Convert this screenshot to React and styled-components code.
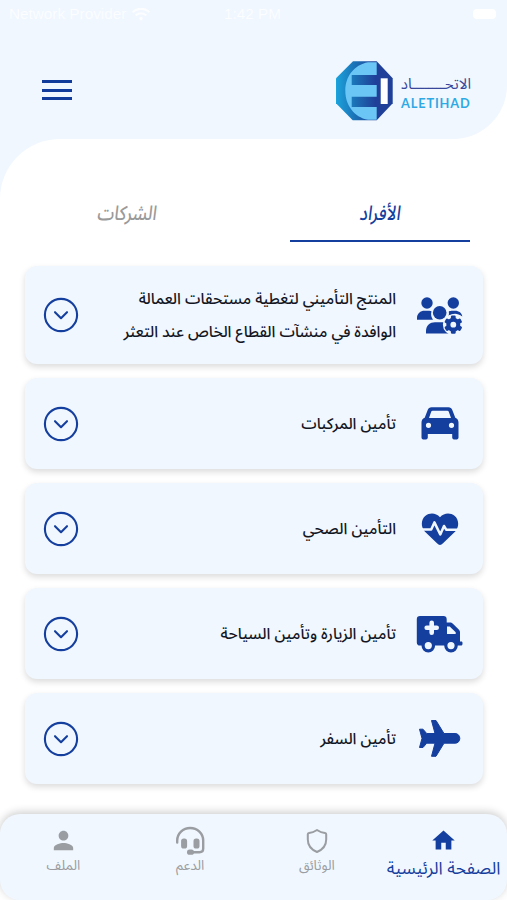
import React from "react";
import styled, { createGlobalStyle } from "styled-components";
import { FaWifi } from "react-icons/fa";
import { MdPerson, MdHome } from "react-icons/md";

const GlobalStyle = createGlobalStyle`
  * {
    box-sizing: border-box;
  }
  body {
    margin: 0;
    background: #fff;
    font-family: "Noto Sans Arabic", "Noto Sans", "DejaVu Sans", sans-serif;
  }
  svg {
    display: block;
  }
`;

const Screen = styled.div`
  display: flex;
  flex-direction: column;
  height: 900px;
  overflow: hidden;
  background: linear-gradient(#f0f7ff 50%, #fff 50%);
`;

const HeaderBack = styled.div`
  flex: none;
  background: linear-gradient(to right, #f0f7ff 50%, #fff 50%);
`;

const Header = styled.header`
  height: 139px;
  background: #f0f7ff;
  border-radius: 0 0 54px 0;
`;

const StatusBar = styled.div`
  display: grid;
  grid-template-columns: 1fr auto 1fr;
  align-items: center;
  height: 27px;
  padding: 0 11px 0 9px;
  font: 15.3px "Liberation Sans", sans-serif;
  color: #fbfdff;
`;

const Carrier = styled.div`
  display: flex;
  align-items: center;
  gap: 6px;
  white-space: nowrap;
`;

const Battery = styled.div`
  justify-self: end;
  width: 23px;
  height: 10px;
  border-radius: 4px;
  background: #fff;
`;

const TopBar = styled.div`
  display: flex;
  align-items: center;
  justify-content: space-between;
  height: 126px;
  padding: 0 36px 0 42px;
`;

const Burger = styled.div`
  display: flex;
  flex-direction: column;
  justify-content: space-between;
  width: 30px;
  height: 20px;

  span {
    height: 3px;
    background: #123c9c;
  }
`;

const Brand = styled.div`
  display: flex;
  align-items: center;
  gap: 8px;
  padding-top: 2px;
`;

const BrandName = styled.div`
  display: flex;
  flex-direction: column;
  width: 70px;
  white-space: nowrap;
`;

const BrandArabic = styled.span`
  font-size: 15px;
  line-height: 23px;
  color: #38479a;
`;

const BrandLatin = styled.span`
  font: 700 12.8px/14px Lato, sans-serif;
  letter-spacing: 0.85px;
  color: #2fa9e4;
`;

const Body = styled.main`
  flex: 1;
  padding: 61px 24px 0 25px;
  background: #fff;
  border-radius: 60px 0 0 0;
`;

const Tabs = styled.div`
  display: grid;
  grid-template-columns: 180px 180px;
  justify-content: space-between;
  padding: 0 13px 0 12px;
`;

const Tab = styled.div`
  height: 42px;
  border-bottom: 2px solid ${({ $active }) => ($active ? "#153f9e" : "transparent")};
  color: ${({ $active }) => ($active ? "#153f9e" : "#9a9a9a")};
  font-size: 20px;
  font-weight: 500;
  line-height: 28px;
  text-align: center;

  span {
    display: inline-block;
    transform: scaleX(0.84) skewX(-10deg);
  }
`;

const List = styled.div`
  display: flex;
  flex-direction: column;
  gap: 14px;
  padding-top: 24px;
`;

const Card = styled.div`
  display: flex;
  align-items: center;
  height: ${({ $tall }) => ($tall ? "98px" : "91px")};
  padding: 0 20px 0 18px;
  background: #f0f7ff;
  border-radius: 12px;
  box-shadow: 0 3px 6px rgba(0, 0, 0, 0.14);
`;

const CardText = styled.div`
  flex: 1;
  padding: 2px 20px 0 0;
  font-size: 15.5px;
  font-weight: 500;
  line-height: 33px;
  color: #14161f;
  white-space: nowrap;
`;

const IconBox = styled.div`
  display: flex;
  justify-content: center;
  width: 47px;
  color: #153f9e;
`;

const BottomNav = styled.nav`
  flex: none;
  display: grid;
  grid-template-columns: repeat(4, 1fr);
  height: 86px;
  background: #f0f7ff;
  border-radius: 20px;
  box-shadow: 0 -2px 8px rgba(0, 0, 0, 0.2);
`;

const NavItem = styled.div`
  display: flex;
  flex-direction: column;
  align-items: center;
  padding-top: 11px;
  font-size: ${({ $active }) => ($active ? "17.4px" : "13.6px")};
  line-height: ${({ $active }) => ($active ? "25px" : "20px")};
  color: ${({ $active }) => ($active ? "#153f9e" : "#9a9da1")};
  white-space: nowrap;
`;

const NavIcon = styled.div`
  display: grid;
  place-items: center;
  width: 32px;
  height: 31px;
`;

const Logo = () => (
  <svg width="57" height="60" viewBox="0 0 57 60">
    <defs>
      <linearGradient id="logoDark" x1="0" x2="1">
        <stop offset="0" stopColor="#1ba3dc" />
        <stop offset="0.35" stopColor="#1b6fb4" />
        <stop offset="0.7" stopColor="#1f3f98" />
      </linearGradient>
    </defs>
    <path d="M17 .3H40.7L56.7 17.3V42.3L40.7 59.3H16.7L0 42.3V17.3Z" fill="url(#logoDark)" />
    <path d="M40.7 1.2V14H15.7V24H40.7V35.7H15.7V46H40.7V58.8H32C18 56 9.3 44 9.3 29.7S18 4 32 1.2Z" fill="#6cc6f5" />
    <path d="M44.7 17.3h7V43h-7z" fill="#fff" />
  </svg>
);

const gearTeeth = [0, 60, 120, 180, 240, 300];

const UsersGearIcon = () => (
  <svg width="47" height="40" viewBox="0 0 47 40" fill="currentColor">
    <circle cx="11" cy="8" r="5.7" />
    <circle cx="37.3" cy="8" r="5.7" />
    <path d="M1 24.7V23C1 18.5 4.5 15.8 8.5 15.8H13.3C14.3 15.8 15 16 15.5 16.2C14.6 19.3 15.2 22.3 17 24.7Z" />
    <path d="M32.8 16.5C34 15.9 35 15.8 36.5 15.8H39C43 15.8 46 18.2 46.3 21.5C41 17.5 36.5 18 32.5 21.2C33 19.5 33.1 18 32.8 16.5Z" />
    <circle cx="23.7" cy="17.8" r="6.8" />
    <path d="M10 38.5V36C10 30.5 14 27.3 19 27.3H29L34 38.5Z" />
    <circle cx="37.3" cy="29.7" r="10.4" fill="#f0f7ff" />
    <circle cx="37.3" cy="29.7" r="7" />
    {gearTeeth.map((deg) => (
      <rect key={deg} x="34.9" y="20.6" width="4.8" height="5" rx="1.2" transform={`rotate(${deg} 37.3 29.7)`} />
    ))}
    <circle cx="37.3" cy="29.7" r="2.9" fill="#f0f7ff" />
  </svg>
);

const CarIcon = () => (
  <svg width="38" height="33" viewBox="0 0 38 33" fill="currentColor">
    <path
      fillRule="evenodd"
      d="M10.5.3H27.5C29.3.3 30.6 1.2 31.3 2.9L34.3 10.7C36.4 11.5 37.5 13.2 37.5 15.4V30.6C37.5 31.8 36.8 32.4 35.8 32.4H33C31.9 32.4 31.2 31.8 31.2 30.6V27H6.8V30.6C6.8 31.8 6.1 32.4 5 32.4H2.2C1.2 32.4.5 31.8.5 30.6V15.4C.5 13.2 1.6 11.5 3.7 10.7L6.7 2.9C7.4 1.2 8.7.3 10.5.3ZM11.6 3.7C10.9 3.7 10.5 4 10.2 4.7L8 11H30L27.8 4.7C27.5 4 27.1 3.7 26.4 3.7ZM7.5 15.7A2.6 2.6 0 1 0 7.5 20.9A2.6 2.6 0 1 0 7.5 15.7ZM30.5 15.7A2.6 2.6 0 1 0 30.5 20.9A2.6 2.6 0 1 0 30.5 15.7Z"
    />
  </svg>
);

const HeartIcon = () => (
  <svg width="38" height="33" viewBox="0 -1 38 33">
    <path d="M19 4.2C23-.4 29.5-.5 33.5 2.8C37.8 6.3 38.6 13 34.5 18.2L22 30.3C20 32.4 18 32.4 16 30.3L3.5 18.2C-.6 13 .2 6.3 4.5 2.8C8.5-.5 15-.4 19 4.2Z" fill="currentColor" />
    <path d="M0 16.4H10.2L13.4 9.4L19.3 21.5L23 13L25.2 16.7H38" fill="none" stroke="#f0f7ff" strokeWidth="2.5" strokeLinejoin="round" />
  </svg>
);

const AmbulanceIcon = () => (
  <svg width="47" height="38" viewBox="0 0 47 38" fill="currentColor">
    <path d="M4 1H27.5C29.5 1 30.7 2.2 30.7 4.2V7.5H34C35.2 7.5 36 7.8 36.9 8.7L42.5 14.3C43.5 15.3 44 16.2 44 17.5V26.5H45.3C46.2 26.5 46.5 27 46.5 28V28.8C46.5 30 46 30.6 45 30.6H4C2 30.6.8 29.4.8 27.4V4.2C.8 2.2 2 1 4 1Z" />
    <path d="M31 11.4H33.7L39.7 17.2V19H31Z" fill="#f0f7ff" />
    <path d="M15.7 7.7V17.7M10.7 12.7H20.7" stroke="#f0f7ff" strokeWidth="4.6" strokeLinecap="round" />
    <circle cx="12.3" cy="30.6" r="5.2" fill="#f0f7ff" stroke="currentColor" strokeWidth="3.2" />
    <circle cx="35" cy="30.6" r="5.2" fill="#f0f7ff" stroke="currentColor" strokeWidth="3.2" />
  </svg>
);

const PlaneIcon = () => (
  <svg width="43" height="39" viewBox="0 0 43 39" fill="currentColor">
    <path
      d="M13.5 1.5H18L26 14.5H37C40 14.5 41.8 16.8 41.8 19.4S40 24.2 37 24.2H26L18 37.3H13.5L17 24.2H8.7L5 28.5H1.5L4 19.4L1.5 10.2H5L8.7 14.5H17Z"
      stroke="currentColor"
      strokeLinejoin="round"
    />
  </svg>
);

const ChevronIcon = () => (
  <svg width="36" height="36" viewBox="0 0 36 36" fill="none" stroke="#153f9e" strokeWidth="2.1" strokeLinecap="round" strokeLinejoin="round">
    <circle cx="18" cy="18" r="16.1" />
    <path d="M12 15.2L18 21.2L24 15.2" />
  </svg>
);

const HeadsetIcon = () => (
  <svg width="30" height="30" viewBox="0 0 30 30" fill="currentColor">
    <path d="M2.2 16.5V14.5C2.2 7.5 8 2 15.2 2S28.2 7.5 28.2 14.5V22.5C28.2 25 26.8 26.2 24.5 26.2H16" fill="none" stroke="currentColor" strokeWidth="2.4" strokeLinecap="round" />
    <rect x="6.1" y="12.5" width="6" height="10" rx="2.6" />
    <rect x="18.5" y="12.5" width="6" height="10" rx="2.6" />
    <rect x="12" y="23.6" width="7" height="5.2" rx="2.6" />
  </svg>
);

const ShieldIcon = () => (
  <svg width="22" height="26" viewBox="0 0 22 26" fill="none" stroke="currentColor" strokeWidth="2" strokeLinejoin="round">
    <path d="M11 2C13.5 3.7 16.2 4.7 19 5C20 5.1 20.2 5.5 20.2 6.3V11.5C20.2 17.5 17 21.5 11 24C5 21.5 1.8 17.5 1.8 11.5V6.3C1.8 5.5 2 5.1 3 5C5.8 4.7 8.5 3.7 11 2Z" />
  </svg>
);

const cards = [
  {
    lines: ["المنتج التأميني لتغطية مستحقات العمالة", "الوافدة في منشآت القطاع الخاص عند التعثر"],
    icon: <UsersGearIcon />,
  },
  { lines: ["تأمين المركبات"], icon: <CarIcon /> },
  { lines: ["التأمين الصحي"], icon: <HeartIcon /> },
  { lines: ["تأمين الزيارة وتأمين السياحة"], icon: <AmbulanceIcon /> },
  { lines: ["تأمين السفر"], icon: <PlaneIcon /> },
];

const navItems = [
  { label: "الملف", icon: <MdPerson size={29} /> },
  { label: "الدعم", icon: <HeadsetIcon /> },
  { label: "الوثائق", icon: <ShieldIcon /> },
  { label: "الصفحة الرئيسية", icon: <MdHome size={27} />, active: true },
];

const App = () => (
  <Screen>
    <GlobalStyle />
    <HeaderBack>
      <Header>
        <StatusBar>
          <Carrier>
            Network Provider <FaWifi size={18} />
          </Carrier>
          <span>1:42 PM</span>
          <Battery />
        </StatusBar>
        <TopBar>
          <Burger>
            <span />
            <span />
            <span />
          </Burger>
          <Brand>
            <Logo />
            <BrandName>
              <BrandArabic dir="rtl">الاتحــــــــاد</BrandArabic>
              <BrandLatin>ALETIHAD</BrandLatin>
            </BrandName>
          </Brand>
        </TopBar>
      </Header>
    </HeaderBack>
    <Body>
      <Tabs>
        <Tab>
          <span>الشركات</span>
        </Tab>
        <Tab $active>
          <span>الأفراد</span>
        </Tab>
      </Tabs>
      <List>
        {cards.map((card, index) => (
          <Card key={index} $tall={card.lines.length > 1}>
            <ChevronIcon />
            <CardText dir="rtl">
              {card.lines.map((line) => (
                <div key={line}>{line}</div>
              ))}
            </CardText>
            <IconBox>{card.icon}</IconBox>
          </Card>
        ))}
      </List>
    </Body>
    <BottomNav>
      {navItems.map((item) => (
        <NavItem key={item.label} $active={item.active}>
          <NavIcon>{item.icon}</NavIcon>
          {item.label}
        </NavItem>
      ))}
    </BottomNav>
  </Screen>
);

export default App;
